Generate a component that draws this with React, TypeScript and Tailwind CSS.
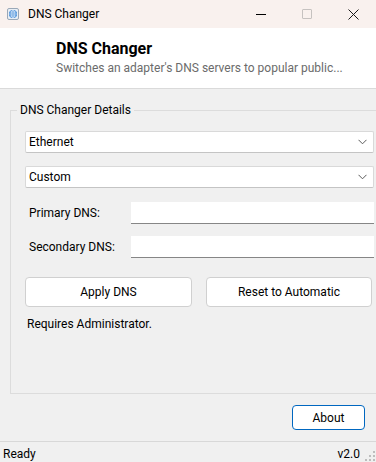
import React from "react";

const font = { fontFamily: 'Roboto, "Noto Sans", sans-serif' };

function Chevron() {
  return (
    <svg width="9" height="6" viewBox="0 0 9 6" className="shrink-0">
      <path d="M0.5 0.8 L4.5 4.8 L8.5 0.8" fill="none" stroke="#5a5a5a" strokeWidth="1" />
    </svg>
  );
}

function Combo({ label }: { label: string }) {
  return (
    <div className="flex items-center justify-between h-[22px] w-[349px] bg-white border border-[#d9d9d9] border-b-[#c4c4c4] rounded-[2px] pl-[3px] pr-[6px] text-[12px] text-black">
      <span>{label}</span>
      <Chevron />
    </div>
  );
}

function Field({ label, gap }: { label: string; gap: string }) {
  return (
    <div className={`flex items-center h-[22px] ${gap}`}>
      <span className="w-[106px] pl-[4px] text-[12px] text-black">{label}</span>
      <div className="h-[22px] w-[243px] bg-white border-b border-[#868686]" />
    </div>
  );
}

export default function App() {
  return (
    <div className="w-[376px] h-[462px] flex flex-col bg-[#f0f0f0] overflow-hidden select-none" style={font}>
      {/* Title bar */}
      <div className="h-[28px] shrink-0 flex items-center bg-[#f9f1ee] relative">
        <svg width="12" height="12" viewBox="0 0 12 12" className="ml-[7px]">
          <rect x="0.5" y="0.5" width="11" height="11" rx="1.5" fill="#e8eef5" stroke="#9aa8b8" />
          <circle cx="6" cy="6" r="4" fill="#3a86d6" />
          <path d="M2 6 H10 M6 2 V10 M3 4 H9 M3 8 H9" stroke="#d7e7f8" strokeWidth="0.7" />
          <ellipse cx="6" cy="6" rx="1.8" ry="4" fill="none" stroke="#d7e7f8" strokeWidth="0.7" />
        </svg>
        <span className="ml-[9px] text-[12px] text-black">DNS Changer</span>
        <div className="ml-auto flex items-center h-full">
          <div className="w-[46px] h-full flex items-center justify-center">
            <div className="w-[10px] h-[1px] bg-black" />
          </div>
          <div className="w-[46px] h-full flex items-center justify-center">
            <div className="w-[10px] h-[10px] border border-[#c6c2c0] rounded-[1px]" />
          </div>
          <div className="w-[46px] h-full flex items-center justify-center">
            <svg width="11" height="11" viewBox="0 0 11 11">
              <path d="M0.5 0.5 L10.5 10.5 M10.5 0.5 L0.5 10.5" stroke="#1a1a1a" strokeWidth="1" />
            </svg>
          </div>
        </div>
      </div>

      {/* Header */}
      <div className="h-[61px] shrink-0 bg-white border-b border-[#dadada] pl-[56px] pt-[11px]">
        <div className="text-[16px] font-bold leading-[20px] text-black">DNS Changer</div>
        <div className="text-[12px] leading-[16px] mt-[1px] text-[#6b6b6b]">
          Switches an adapter's DNS servers to popular public...
        </div>
      </div>

      {/* Body */}
      <div className="flex-1 flex flex-col">
        <div className="relative mt-[21px] ml-[10px] w-[372px] h-[284px] border border-[#dcdcdc] pt-[20px] pl-[14px]">
          <span className="absolute left-[6px] top-[-9px] px-[3px] bg-[#f0f0f0] text-[12px] leading-[16px] text-black">
            DNS Changer Details
          </span>
          <Combo label="Ethernet" />
          <div className="mt-[13px]">
            <Combo label="Custom" />
          </div>
          <Field label="Primary DNS:" gap="mt-[14px]" />
          <Field label="Secondary DNS:" gap="mt-[12px]" />
          <div className="flex mt-[19px] gap-[14px]">
            <button className="w-[167px] h-[30px] bg-white border border-[#d0d0d0] rounded-[4px] text-[12px] text-black">
              Apply DNS
            </button>
            <button className="w-[166px] h-[30px] bg-white border border-[#d0d0d0] rounded-[4px] text-[12px] text-black">
              Reset to Automatic
            </button>
          </div>
          <div className="mt-[9px] pl-[2px] text-[12px] leading-[16px] text-black">Requires Administrator.</div>
        </div>
        <div className="flex justify-end mt-[11px] pr-[11px]">
          <button className="w-[73px] h-[25px] bg-white border border-[#0067c0] rounded-[4px] text-[12px] text-black">
            About
          </button>
        </div>
      </div>

      {/* Status bar */}
      <div className="h-[21px] shrink-0 border-t border-[#d8d8d8] flex items-center pl-[3px] pt-[4px] text-[12px] text-black relative">
        <span>Ready</span>
        <span className="ml-auto mr-[16px]">v2.0</span>
        <svg width="12" height="12" viewBox="0 0 12 12" className="absolute right-0 bottom-0">
          {[[9, 1], [9, 5], [5, 5], [9, 9], [5, 9], [1, 9]].map(([x, y], i) => (
            <rect key={i} x={x} y={y} width="2" height="2" fill="#bdbdbd" />
          ))}
        </svg>
      </div>
    </div>
  );
}
